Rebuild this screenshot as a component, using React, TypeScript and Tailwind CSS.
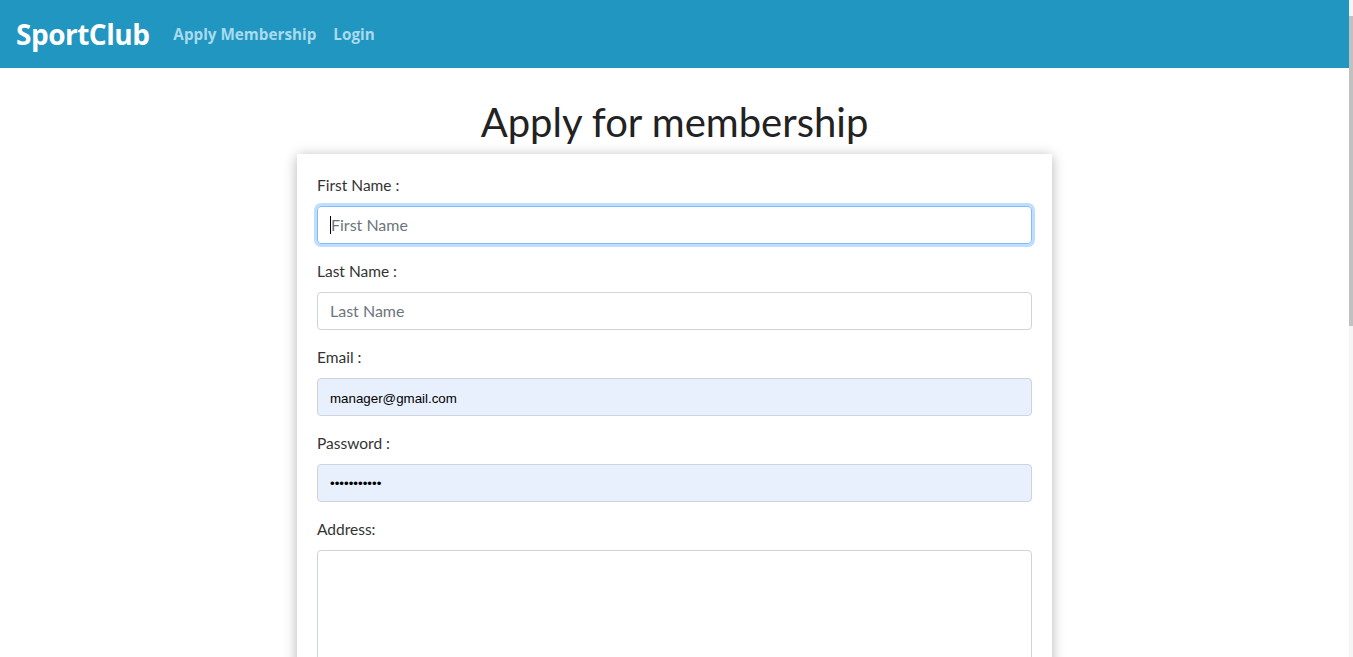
import React from "react";

const labelCls = "block h-[24px] leading-[22px] text-[15.5px] text-[#333] mb-[8px]";
const inputBase =
  "block w-full h-[38px] rounded-[4px] border px-[12px] outline-none";

export default function App() {
  return (
    <div className="flex w-[1353px] h-[657px] overflow-hidden bg-white">
      <div className="w-[1349px] flex flex-col" style={{ fontFamily: "Lato, 'Open Sans', sans-serif" }}>
        <header className="h-[68px] bg-[#2196c0] flex items-center px-[16px] shrink-0">
          <span className="text-white font-bold text-[28px] tracking-[-0.5px]" style={{ fontFamily: "'Open Sans', sans-serif" }}>
            SportClub
          </span>
          <nav className="flex items-center ml-[24px] gap-[17px] text-[15.25px] font-bold text-[#a9daee]" style={{ fontFamily: "'Open Sans', sans-serif" }}>
            <span>Apply Membership</span>
            <span>Login</span>
          </nav>
        </header>
        <main className="flex flex-col items-center">
          <h1 className="mt-[28px] text-[40px] leading-[52px] text-[#222] font-normal">Apply for membership</h1>
          <div className="mt-[6px] w-[755px] bg-white shadow-[0_2px_12px_rgba(0,0,0,0.3)] px-[20px] pt-[20px] pb-[20px]">
            <label className={labelCls}>First Name :</label>
            <div className={`${inputBase} border-[#80bdff] shadow-[0_0_0_3px_rgba(0,123,255,0.25)] flex items-center text-[16px] text-[#6c757d] mb-[16px]`}>
              <span className="w-[1px] h-[18px] bg-black" />
              First Name
            </div>
            <label className={labelCls}>Last Name :</label>
            <div className={`${inputBase} border-[#ced4da] flex items-center text-[16px] text-[#6c757d] mb-[16px]`}>
              Last Name
            </div>
            <label className={labelCls}>Email :</label>
            <div
              className={`${inputBase} border-[#ced4da] bg-[#e8f0fe] flex items-center pt-[3px] text-[13.33px] text-black mb-[16px]`}
              style={{ fontFamily: "'Liberation Sans', Arial, sans-serif" }}
            >
              manager@gmail.com
            </div>
            <label className={labelCls}>Password :</label>
            <div
              className={`${inputBase} border-[#ced4da] bg-[#e8f0fe] flex items-center pt-[2px] text-[13.33px] text-black mb-[16px]`}
              style={{ fontFamily: "'Liberation Sans', Arial, sans-serif" }}
            >
              •••••••••••
            </div>
            <label className={labelCls}>Address:</label>
            <div className="w-full h-[150px] rounded-[4px] border border-[#ced4da]" />
          </div>
        </main>
      </div>
      <div className="w-[4px] h-full bg-[#f5f5f5] flex flex-col">
        <div className="mt-[16px] h-[310px] w-full bg-[#c1c1c1]" />
      </div>
    </div>
  );
}
